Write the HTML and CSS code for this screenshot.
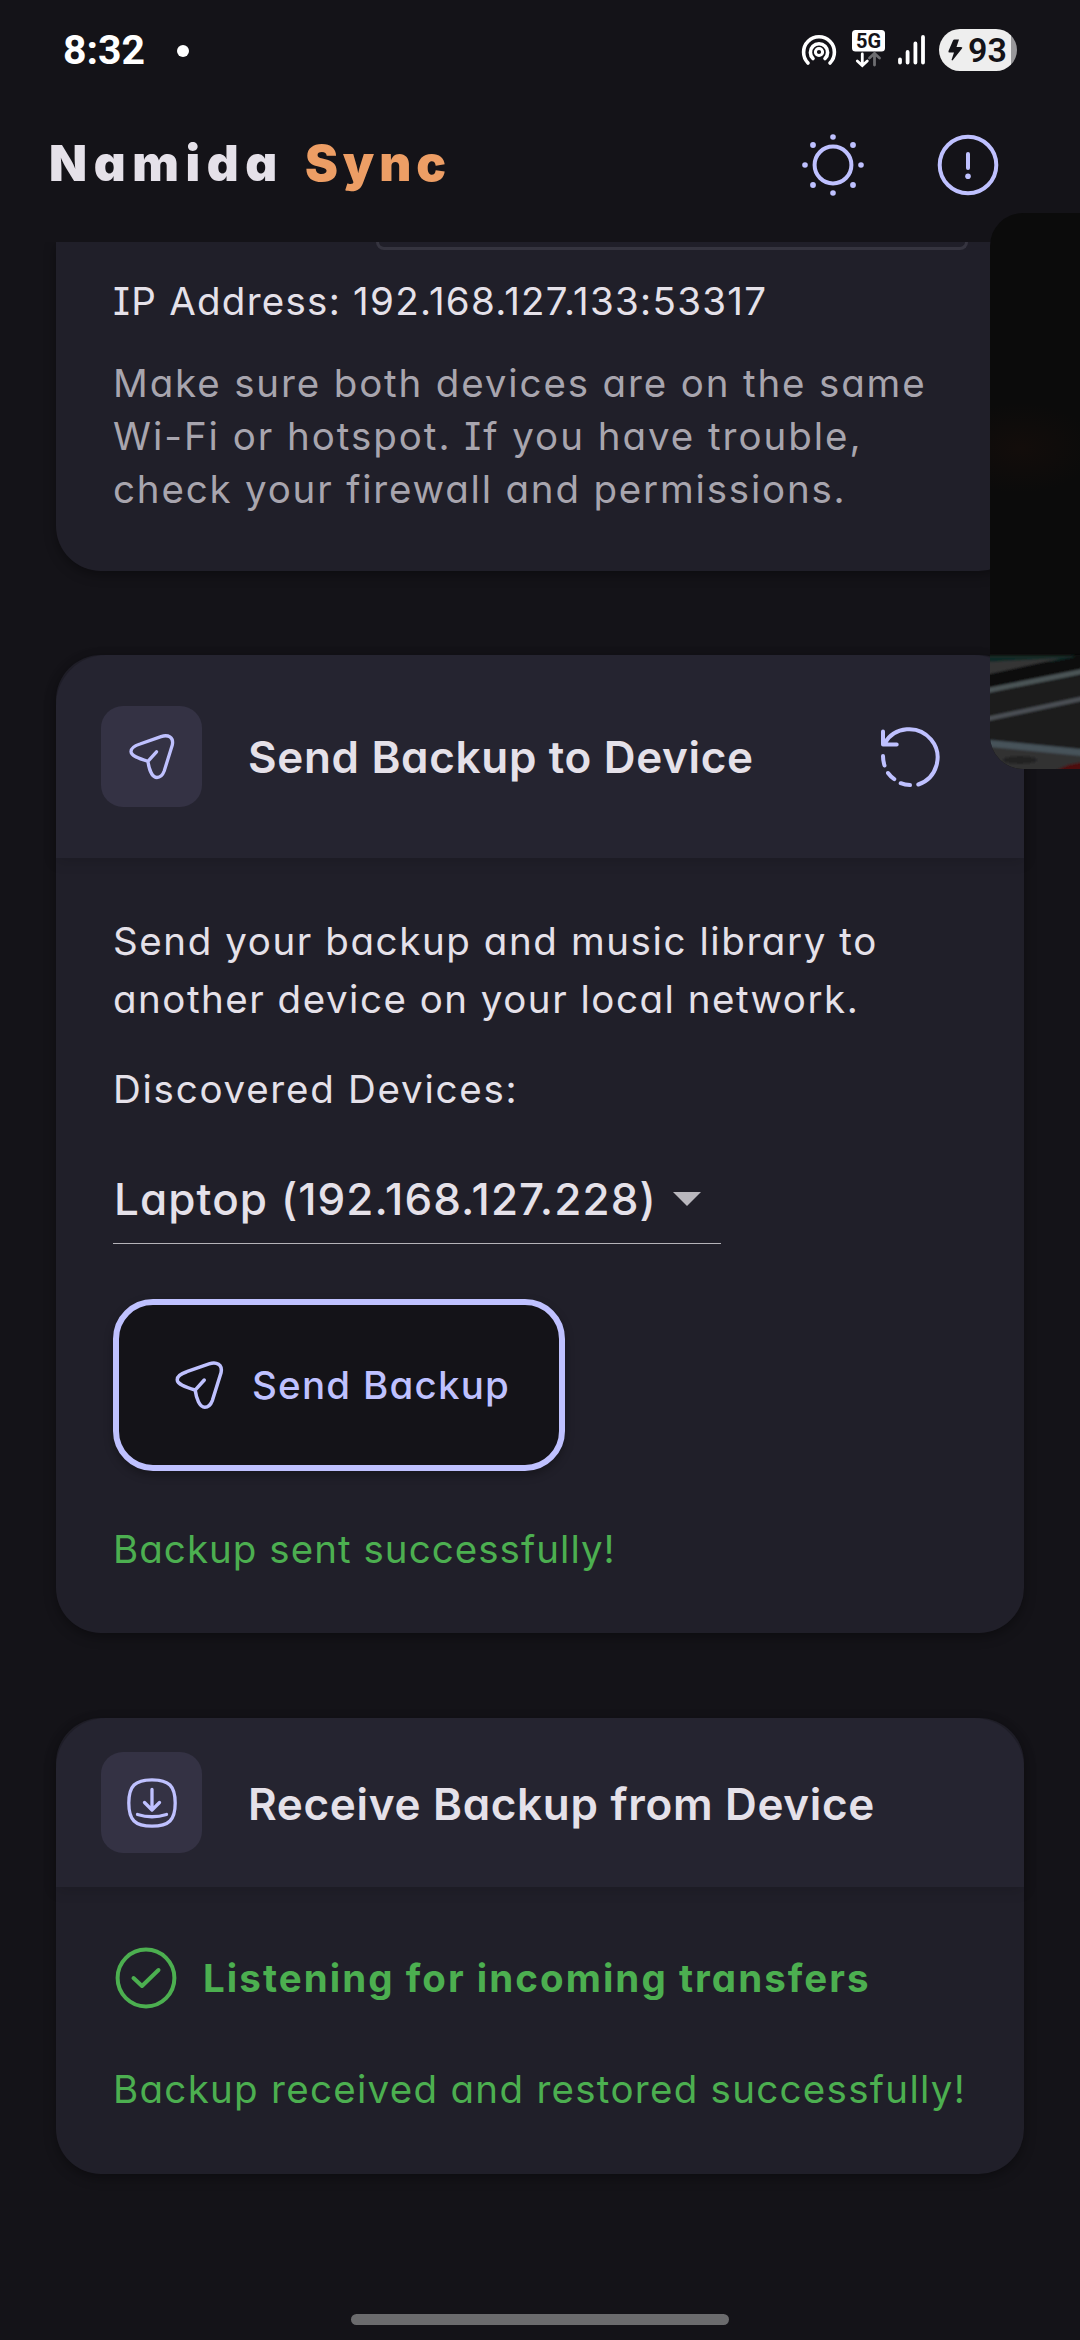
FILE: index.html
```
<!DOCTYPE html>
<html lang="en">
<head>
<meta charset="utf-8">
<title>Namida Sync</title>
<link rel="stylesheet" href="styles.css">
</head>
<body>
<div class="screen">
  <div class="statusbar">
    <div class="clock"><span class="time">8:32</span><i class="dot"></i></div>
    <svg class="status-icons" width="182" height="50" viewBox="800 26 182 50" fill="none" stroke="#fff" stroke-linecap="round">
      <path d="M808 64a15.400 15.400 0 1 1 22 0M813 59.500a8.600 8.600 0 1 1 12 0" stroke-width="3.600"/>
      <circle cx="819" cy="53" r="3.600" stroke-width="3"/>
      <rect x="852" y="31" width="33" height="21.500" rx="3.500" fill="#fff" stroke="none"/>
      <path d="M862.300 55v11M857.300 62l5 4.500 5-4.500" stroke-width="2.800"/>
      <path d="M874.500 66V54.500M869.500 59l5-4.500 5 4.500" stroke="#6d6d70" stroke-width="2.800"/>
      <path d="M900 60.500v3M907.600 53v10.500M915.400 44.500v19M923 38v25.500" stroke-width="3.800"/>
      <text x="868.500" y="49.300" text-anchor="middle" class="netgen">5G</text>
    </svg>
    <div class="battery">
      <svg width="15" height="22" viewBox="0 0 15 22" fill="#141318"><path d="M5 1.500Q5.500.500 6.500.500H11L8.500 8H13q2 0 1 1.500L4.500 21.500 3.500 21 6 13.500H1.500Q0 13.500.500 12Z"/></svg>
      <span>93</span>
    </div>
  </div>

  <header class="appbar">
    <h1 class="brand"><span class="brand-a">Namida</span><span class="brand-b">Sync</span></h1>
    <div class="actions">
      <svg width="64" height="64" viewBox="-32 -32 64 64">
        <circle r="18.400" fill="none" stroke="#bfc1ff" stroke-width="4"/>
        <g fill="#bfc1ff"><circle cy="-28" r="2.800"/><circle cy="28" r="2.800"/><circle cx="-28" r="2.800"/><circle cx="28" r="2.800"/><circle cx="20" cy="20" r="2.900"/><circle cx="-20" cy="20" r="2.900"/><circle cx="20" cy="-20" r="2.900"/><circle cx="-20" cy="-20" r="2.900"/></g>
      </svg>
      <svg width="64" height="64" viewBox="-32 -32 64 64" fill="none" stroke="#bfc1ff" stroke-width="4" stroke-linecap="round">
        <circle r="28.300"/><path d="M0-11V3"/><circle cy="11.200" r="2.800" fill="#bfc1ff" stroke="none"/>
      </svg>
    </div>
  </header>

  <main class="content">
    <section class="card card-top">
      <div class="field"></div>
      <p class="txt ip">IP Address: 192.168.127.133:53317</p>
      <p class="txt hint"><span class="h1">Make sure both devices are on the same</span><br><span class="h2">Wi-Fi or hotspot. If you have trouble,</span><br><span class="h3">check your firewall and permissions.</span></p>
    </section>

    <section class="card">
      <div class="card-head head-send">
        <div class="badge"><svg width="50" height="50" viewBox="0 0 50 50" class="ic"><path d="M20.900 29.300C12 26.500 4 24 4 19.500C4 15.500 9 13.300 13 12L34 4.600C41 2.300 47 5 45.300 13L37.200 39C35.500 43.500 33.500 45.500 30 45.500C25 45.500 22 37 20.900 29.300ZL29.500 19.800"/></svg></div>
        <h2 class="t-send">Send Backup to Device</h2>
        <svg class="refresh" width="64" height="64" viewBox="879 726.500 64 64" fill="none" stroke="#bfc1ff" stroke-width="4" stroke-linecap="round" stroke-linejoin="round"><path d="M883 733v13h13.700M884.500 745A28.400 28.400 0 1 1 918.300 786M883 757.500Q883 762 884.500 767M888 774.500Q890.500 778 894.300 780.700M900.700 784.700Q905 786.500 910 786.600"/></svg>
      </div>
      <div class="card-body body-send">
        <p class="txt desc"><span class="d1">Send your backup and music library to</span><br><span class="d2">another device on your local network.</span></p>
        <p class="txt found">Discovered Devices:</p>
        <div class="select"><span>Laptop (192.168.127.228)</span><i class="caret"></i></div>
        <button class="send"><svg width="53" height="53" viewBox="0 0 50 50" class="ic"><path d="M20.900 29.300C12 26.500 4 24 4 19.500C4 15.500 9 13.300 13 12L34 4.600C41 2.300 47 5 45.300 13L37.200 39C35.500 43.500 33.500 45.500 30 45.500C25 45.500 22 37 20.900 29.300ZL29.500 19.800"/></svg><span>Send Backup</span></button>
        <p class="txt ok sent">Backup sent successfully!</p>
      </div>
    </section>

    <section class="card card-recv">
      <div class="card-head head-recv">
        <div class="badge"><svg width="52" height="52" viewBox="0 0 52 52" class="ic"><path d="M26 2.800C43 2.800 49.200 9 49.200 26S43 49.200 26 49.200 2.800 43 2.800 26 9 2.800 26 2.800ZM26 12.500V32M18.500 25.500L26 33l7.500-7.500M11.500 37.500Q26 42 40.500 37.500"/></svg></div>
        <h2 class="t-recv">Receive Backup from Device</h2>
      </div>
      <div class="card-body body-recv">
        <div class="listening"><svg width="62" height="62" viewBox="-31 -31 62 62" fill="none" stroke="#4caf50" stroke-width="4" stroke-linecap="round" stroke-linejoin="round"><circle r="28.400"/><path d="M-12.500 0L-4 8L12.500-8"/></svg><strong>Listening for incoming transfers</strong></div>
        <p class="txt ok recv">Backup received and restored successfully!</p>
      </div>
    </section>
  </main>
  <div class="handle"></div>

  <svg class="pip" width="90" height="556" viewBox="990 213 90 556">
    <defs>
      <clipPath id="pipclip"><rect x="990" y="213" width="140" height="556" rx="33"/></clipPath>
      <filter id="soft"><feGaussianBlur stdDeviation="1"/></filter>
      <radialGradient id="glow"><stop offset="0" stop-color="#130d0b"/><stop offset="1" stop-color="#0b0b0b"/></radialGradient>
    </defs>
    <g clip-path="url(#pipclip)">
      <rect x="990" y="213" width="90" height="556" fill="#0b0b0b"/>
      <ellipse cx="1020" cy="448" rx="75" ry="45" fill="url(#glow)"/>
      <g filter="url(#soft)">
        <path d="M985 655H1085V775H985Z" fill="#0c0d0d"/>
        <path d="M985 693L1085 675V775H985Z" fill="#1b1b1c"/>
        <path d="M985 656H1076L1040 663 990 674H985Z" fill="#343536"/>
        <path d="M985 656.500H1078L1046 663 1060 658 985 662Z" fill="#0c2b25"/>
        <path d="M985 691L1085 671" stroke="#4c5456" stroke-width="5"/>
        <path d="M985 719.500L1085 698" stroke="#4b5054" stroke-width="4.500"/>
        <path d="M985 745L1085 756V775H985Z" fill="#303031"/>
        <ellipse cx="1020" cy="760" rx="17" ry="4" fill="#242424"/>
        <path d="M985 743L1085 753" stroke="#46525a" stroke-width="7"/>
        <path d="M1053 772L1068 765 1085 762V775Z" fill="#4d0e0e"/>
      </g>
    </g>
  </svg>
</div>
</body>
</html>
```
FILE: styles.css
```
* { box-sizing: border-box; margin: 0; padding: 0; }
body { background: #141318; }
svg { display: block; flex: none; }
.screen {
  position: relative;
  width: 1080px;
  height: 2340px;
  overflow: hidden;
  display: flex;
  flex-direction: column;
  background: #141318;
  color: #e5e1e9;
  font-family: Inter, "Open Sans", sans-serif;
  font-feature-settings: "cv08", "cv11";
}
.statusbar {
  height: 100px;
  padding: 0 63px 0 63px;
  display: flex;
  align-items: center;
  font-family: Roboto, sans-serif;
  color: #fff;
}
.clock { flex: 1; display: flex; align-items: center; gap: 32px; }
.time { font-size: 41px; font-weight: 700; line-height: 50px; }
.dot { width: 12px; height: 12px; border-radius: 50%; background: #fff; margin-top: 2px; }
.status-icons { margin-right: -43px; margin-top: 0; }
.netgen { font: 700 20px Roboto, sans-serif; fill: #141318; stroke: none; }
.battery {
  width: 78px;
  height: 42px;
  border-radius: 21px;
  padding-left: 9px;
  display: flex;
  align-items: center;
  gap: 5px;
  background: linear-gradient(90deg, #eee 72px, #98979a 72px);
  color: #141318;
  font-size: 34px;
  font-weight: 600;
  line-height: 42px;
}
.appbar {
  height: 142px;
  padding: 0 80px 13px 49px;
  display: flex;
  align-items: center;
  justify-content: space-between;
}
.brand { display: flex; margin-bottom: 4px; font-size: 49.5px; font-weight: 900; line-height: 60px; }
.brand-a { width: 256px; letter-spacing: 6.6px; }
.brand-b { letter-spacing: 4.9px; color: #ed9e65; }
.actions { display: flex; gap: 71px; }
.content { height: 1960px; padding: 0 56px; overflow: hidden; display: flex; flex-direction: column; gap: 84px; }
.card {
  background: #201f29;
  border-radius: 45px;
  box-shadow: 0 4px 12px rgba(0, 0, 0, .35);
}
.card-top { height: 329px; padding: 0 57px 55px; border-radius: 0 0 45px 45px; }
.card-recv { margin-top: 1px; }
.field {
  width: 592px;
  height: 8px;
  margin-left: 263px;
  border: 3px solid #35343f;
  border-top: 0;
  border-radius: 0 0 11px 11px;
}
.txt { font-size: 38.5px; line-height: 53px; white-space: nowrap; }
.ip { margin-top: 25px; letter-spacing: 1.26px; }
.hint { margin-top: 29px; color: #a8a5ae; }
.h1 { letter-spacing: 1.86px; }
.h2 { letter-spacing: 1.97px; }
.h3 { letter-spacing: 1.81px; }
.card-head {
  display: flex;
  align-items: center;
  padding: 0 81px 0 45px;
  background: #252430;
  border-radius: 50px 50px 0 0;
  box-shadow: 0 4px 14px rgba(0, 0, 0, .13);
}
.head-send { height: 203px; }
.head-recv { height: 169px; }
.badge {
  width: 101px;
  height: 101px;
  border-radius: 22px;
  background: #343244;
  display: flex;
  align-items: center;
  justify-content: center;
}
.ic { fill: none; stroke: #bfc1ff; stroke-width: 3.3; stroke-linecap: round; stroke-linejoin: round; }
h2 { flex: 1; margin-left: 46px; font-size: 44px; font-weight: 600; line-height: 58px; white-space: nowrap; }
.t-send { letter-spacing: .67px; }
.t-recv { margin-top: 2px; letter-spacing: .69px; }
.card-body { padding: 0 57px; display: flex; flex-direction: column; align-items: flex-start; }
.body-send { padding-top: 54px; padding-bottom: 56px; }
.body-recv { padding-top: 60px; padding-bottom: 58px; }
.desc, .found { line-height: 58px; }
.d1 { letter-spacing: 1.59px; }
.d2 { letter-spacing: 1.51px; }
.found { margin-top: 32px; letter-spacing: 1.75px; }
.select {
  width: 608px;
  height: 74px;
  margin-top: 52px;
  padding: 0 20px 15px 1px;
  display: flex;
  align-items: center;
  justify-content: space-between;
  border-bottom: 1px solid #b5b3b9;
  font-size: 44px;
  font-weight: 500;
  line-height: 58px;
  letter-spacing: 1.08px;
  white-space: nowrap;
}
.caret { border: 14px solid transparent; border-top-color: #b9b7bd; border-bottom: 0; }
.send {
  width: 452px;
  height: 172px;
  margin-top: 55px;
  padding: 0 0 0 54px;
  display: flex;
  align-items: center;
  gap: 26px;
  border: 6px solid #bfc1ff;
  border-radius: 40px;
  background: #141318;
  box-shadow: 0 4px 10px rgba(0, 0, 0, .3);
  color: #bfc1ff;
  font: 500 38.5px/53px Inter, sans-serif;
  font-feature-settings: inherit;
  letter-spacing: 1.24px;
}
.ok { color: #4caf50; }
.sent { margin-top: 52px; margin-bottom: 1px; letter-spacing: 1.04px; }
.listening {
  display: flex;
  align-items: center;
  gap: 26px;
  margin-left: 2px;
  color: #4caf50;
  font-size: 38.5px;
  letter-spacing: 2.05px;
  white-space: nowrap;
}
.recv { margin-top: 54px; letter-spacing: 1.29px; }
.handle { width: 378px; height: 11px; margin: 112px auto 0; border-radius: 6px; background: #6b6b6d; flex: none; }
.pip { position: absolute; left: 990px; top: 213px; }
```
